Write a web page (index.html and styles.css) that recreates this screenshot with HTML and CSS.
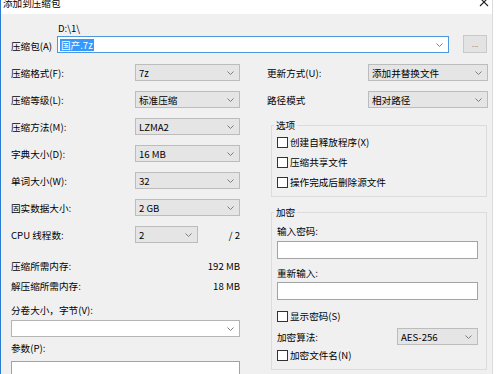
FILE: index.html
```html
<!DOCTYPE html>
<html lang="zh-CN">

<head>
    <meta charset="UTF-8">
    <title>添加到压缩包</title>
    <link rel="stylesheet" href="styles.css">
</head>

<body>
    <div class="window">
        <div class="titlebar">
            <span class="title">添加到压缩包</span>
            <svg class="close" width="10" height="10" viewBox="0 0 10 10">
                <path d="M1 1 L9 9 M9 1 L1 9" stroke="#222" stroke-width="1.1" fill="none" />
            </svg>
        </div>

        <div class="body">
            <!-- 压缩包路径 -->
            <div class="archive">
                <span class="path">D:\1\</span>
                <label class="archive-label">压缩包(A)</label>
                <div class="archive-row">
                    <div class="combo focus">
                        <span class="selected">国产.7z</span>
                        <svg class="chevron" width="7" height="4" viewBox="0 0 7 4">
                            <polyline points="0.5,0.5 3.5,3.5 6.5,0.5" />
                        </svg>
                    </div>
                    <button class="browse">...</button>
                </div>
            </div>

            <div class="columns">
                <!-- 左侧 -->
                <div class="col">
                    <div class="form left-form">
                        <label>压缩格式(F):</label>
                        <div class="select"><span>7z</span><svg class="chevron" width="7" height="4" viewBox="0 0 7 4"><polyline points="0.5,0.5 3.5,3.5 6.5,0.5" /></svg></div>

                        <label>压缩等级(L):</label>
                        <div class="select"><span>标准压缩</span><svg class="chevron" width="7" height="4" viewBox="0 0 7 4"><polyline points="0.5,0.5 3.5,3.5 6.5,0.5" /></svg></div>

                        <label>压缩方法(M):</label>
                        <div class="select"><span>LZMA2</span><svg class="chevron" width="7" height="4" viewBox="0 0 7 4"><polyline points="0.5,0.5 3.5,3.5 6.5,0.5" /></svg></div>

                        <label>字典大小(D):</label>
                        <div class="select"><span>16 MB</span><svg class="chevron" width="7" height="4" viewBox="0 0 7 4"><polyline points="0.5,0.5 3.5,3.5 6.5,0.5" /></svg></div>

                        <label>单词大小(W):</label>
                        <div class="select"><span>32</span><svg class="chevron" width="7" height="4" viewBox="0 0 7 4"><polyline points="0.5,0.5 3.5,3.5 6.5,0.5" /></svg></div>

                        <label>固实数据大小:</label>
                        <div class="select"><span>2 GB</span><svg class="chevron" width="7" height="4" viewBox="0 0 7 4"><polyline points="0.5,0.5 3.5,3.5 6.5,0.5" /></svg></div>

                        <label>CPU 线程数:</label>
                        <div class="cpu">
                            <div class="select cpu-select"><span>2</span><svg class="chevron" width="7" height="4" viewBox="0 0 7 4"><polyline points="0.5,0.5 3.5,3.5 6.5,0.5" /></svg></div>
                            <span class="cpu-max">/ 2</span>
                        </div>
                    </div>

                    <div class="memory">
                        <span>压缩所需内存:</span><span class="value">192 MB</span>
                        <span>解压缩所需内存:</span><span class="value">18 MB</span>
                    </div>

                    <label class="field-label">分卷大小，字节(V):</label>
                    <div class="combo white"><span></span><svg class="chevron" width="7" height="4" viewBox="0 0 7 4"><polyline points="0.5,0.5 3.5,3.5 6.5,0.5" /></svg></div>

                    <label class="field-label params-label">参数(P):</label>
                    <div class="input params"></div>
                </div>

                <!-- 右侧 -->
                <div class="col">
                    <div class="form right-form">
                        <label>更新方式(U):</label>
                        <div class="select"><span>添加并替换文件</span><svg class="chevron" width="7" height="4" viewBox="0 0 7 4"><polyline points="0.5,0.5 3.5,3.5 6.5,0.5" /></svg></div>

                        <label>路径模式</label>
                        <div class="select"><span>相对路径</span><svg class="chevron" width="7" height="4" viewBox="0 0 7 4"><polyline points="0.5,0.5 3.5,3.5 6.5,0.5" /></svg></div>
                    </div>

                    <fieldset class="group options">
                        <legend>选项</legend>
                        <div class="check"><span class="box"></span>创建自释放程序(X)</div>
                        <div class="check"><span class="box"></span>压缩共享文件</div>
                        <div class="check"><span class="box"></span>操作完成后删除源文件</div>
                    </fieldset>

                    <fieldset class="group encrypt">
                        <legend>加密</legend>
                        <div class="pw-label">输入密码:</div>
                        <div class="input pw"></div>
                        <div class="pw-label again">重新输入:</div>
                        <div class="input pw again-input"></div>
                        <div class="check show-pw"><span class="box"></span>显示密码(S)</div>
                        <div class="algo">
                            <span>加密算法:</span>
                            <div class="select algo-select"><span>AES-256</span><svg class="chevron" width="7" height="4" viewBox="0 0 7 4"><polyline points="0.5,0.5 3.5,3.5 6.5,0.5" /></svg></div>
                        </div>
                        <div class="check"><span class="box"></span>加密文件名(N)</div>
                    </fieldset>
                </div>
            </div>
        </div>
    </div>
</body>

</html>
```

FILE: styles.css
```css
* {
    margin: 0;
    padding: 0;
    box-sizing: border-box;
}

body {
    background-color: #fff;
    font-family: "Noto Sans CJK SC", "Liberation Sans", sans-serif;
    font-size: 9.6px;
    color: #000;
    overflow: hidden;
}

.window {
    width: 493px;
    height: 374px;
    background-color: #f0f0f0;
    border-left: 1px solid #2b7bd0;
    border-right: 1px solid #dadada;
    overflow: hidden;
}

.titlebar {
    display: flex;
    justify-content: space-between;
    height: 14px;
    padding: 0 3px 0 2px;
    background-color: #fff;
    overflow: hidden;
}

.title {
    line-height: 14px;
    margin-top: -4px;
}

.close {
    margin-top: -3px;
}

.body {
    padding: 7px 4px 0 10px;
}

/* 压缩包 */
.archive {
    display: grid;
    grid-template-columns: 46px 1fr;
}

.path {
    grid-column: 2;
    line-height: 14px;
    padding-left: 1px;
}

.archive-label {
    grid-column: 1;
    grid-row: 2;
    align-self: center;
    margin-top: 4px;
}

.archive-row {
    grid-column: 2;
    display: flex;
    align-items: center;
    gap: 14px;
    height: 18px;
}

.combo {
    flex: 1;
    display: flex;
    align-items: center;
    justify-content: space-between;
    height: 17px;
    padding: 0 5px 0 2px;
    border: 1px solid #b5b5b5;
    background-color: #fff;
}

.combo.focus {
    border-color: #4d97dc;
    margin-top: 1px;
}

.selected {
    background-color: #3399ff;
    color: #fff;
    line-height: 12px;
    padding: 0 1px;
}

.browse {
    width: 24px;
    height: 18px;
    margin-right: 1px;
    border: 1px solid #c9c9c9;
    background-color: #e3e3e3;
    color: #8a8a8a;
    font-family: inherit;
    font-size: 8px;
    line-height: 12px;
}

.chevron {
    flex: none;
    fill: none;
    stroke: #7d7d7d;
    stroke-width: 1;
}

/* 两列 */
.columns {
    display: grid;
    grid-template-columns: 229px 1fr;
    column-gap: 27px;
    margin-top: 11px;
}

.form {
    display: grid;
    grid-auto-rows: 17px;
    row-gap: 10px;
    align-items: center;
}

.left-form {
    grid-template-columns: 124px 105px;
}

.right-form {
    grid-template-columns: 101px 120px;
}

.select {
    display: flex;
    align-items: center;
    justify-content: space-between;
    height: 17px;
    padding: 0 5px 0 3px;
    border: 1px solid #bcbcbc;
    background-color: #e5e5e5;
}

.cpu {
    display: flex;
    align-items: center;
    justify-content: space-between;
}

.cpu-select {
    width: 63px;
}

.memory {
    display: grid;
    grid-template-columns: 1fr auto;
    grid-auto-rows: 20px;
    align-items: center;
    margin-top: 13px;
}

.value {
    text-align: right;
}

.field-label {
    display: block;
    line-height: 14px;
    margin-top: 7px;
}

.col > .combo {
    margin-top: 3px;
}

.params-label {
    margin-top: 4px;
}

.input {
    background-color: #fff;
    border: 1px solid #a3a3a3;
}

.params {
    height: 30px;
    margin-top: 6px;
}

/* 分组框 */
.group {
    border: 1px solid #dcdcdc;
    margin: 10px 1px 0 4px;
    padding: 0 8px 4px 5px;
}

.group legend {
    line-height: 14px;
    padding: 0 2px;
    margin-left: -3px;
}

.encrypt {
    margin-top: 8px;
}

.check {
    display: flex;
    align-items: center;
    gap: 2px;
    height: 20px;
}

.box {
    width: 11px;
    height: 11px;
    border: 1px solid #333;
    background-color: #fff;
}

.pw-label {
    line-height: 14px;
    margin-top: 5px;
}

.pw-label.again {
    margin-top: 7px;
}

.pw {
    height: 18px;
    margin-top: 3px;
}

.again-input {
    margin-top: 2px;
}

.show-pw {
    margin-top: 6px;
}

.algo {
    display: flex;
    align-items: center;
    justify-content: space-between;
    height: 17px;
    margin-top: 2px;
}

.algo-select {
    width: 81px;
}
```
